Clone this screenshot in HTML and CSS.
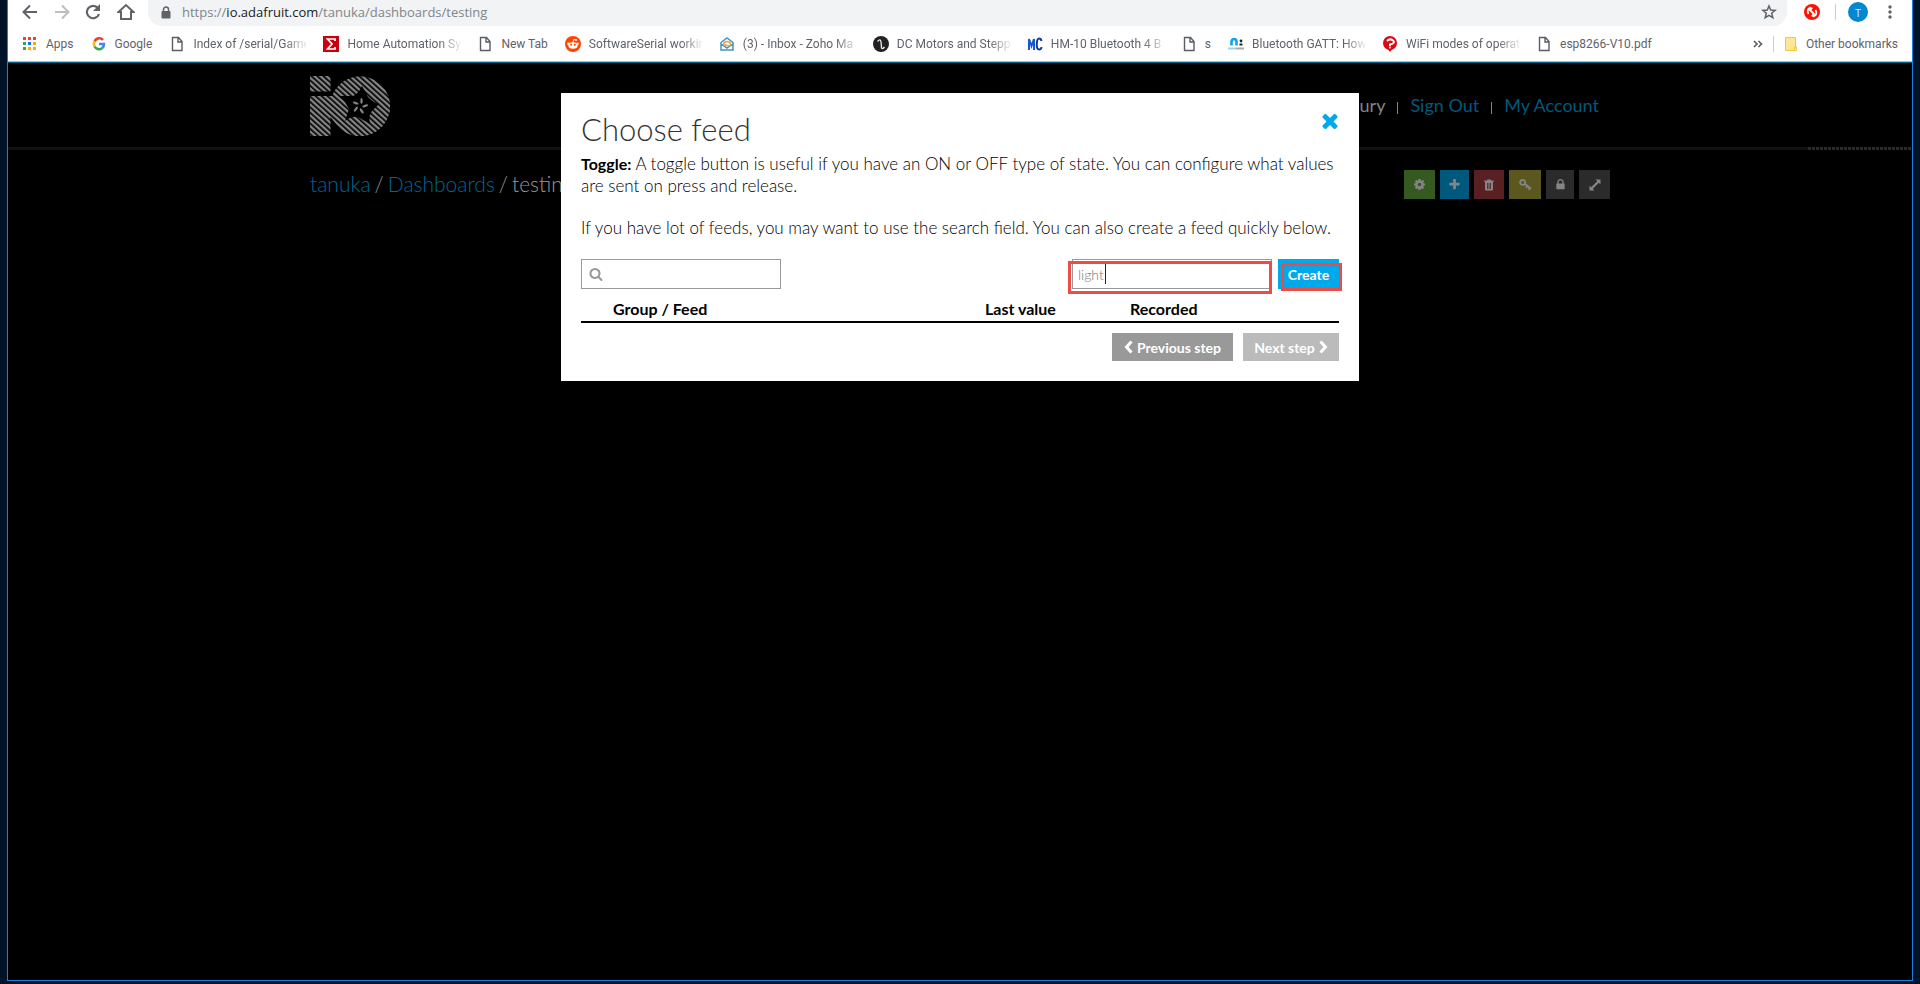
FILE: index.html
```
<!DOCTYPE html>
<html lang="en">
<head>
<meta charset="utf-8">
<title>Adafruit IO - testing</title>
<link rel="stylesheet" href="styles.css">
</head>
<body>
<div class="window">
  <header class="browser">
    <div class="toolbar">
      <div class="nav-buttons">
        <button class="icon-button" aria-label="Back"><svg width="16" height="16" viewBox="0 0 16 16" fill="none" stroke="#5f6368" stroke-width="2"><path d="M15 8H2M8 1.500L1.500 8L8 14.500"/></svg></button>
        <button class="icon-button" aria-label="Forward"><svg width="16" height="16" viewBox="0 0 16 16" fill="none" stroke="#bcbec0" stroke-width="2"><path d="M1 8h13M8 1.500L14.500 8L8 14.500"/></svg></button>
        <button class="icon-button" aria-label="Reload"><svg width="16" height="16" viewBox="0 0 16 16"><path d="M13 4.200A6.200 6.200 0 1 0 14 10" fill="none" stroke="#5f6368" stroke-width="2.200"/><path d="M15 0v7H8z" fill="#5f6368"/></svg></button>
        <button class="icon-button" aria-label="Home"><svg width="18" height="18" viewBox="0 0 18 18" fill="none" stroke="#5f6368" stroke-width="2"><path d="M4 9v7h10V9h2.500L9 2 1.500 9z"/></svg></button>
      </div>
      <div class="address">
        <svg width="10" height="13" viewBox="0 0 10 13"><path d="M2.500 6V3.500a2.500 2.500 0 0 1 5 0V6" fill="none" stroke="#5f6368" stroke-width="1.500"/><rect x="0.500" y="5" width="9" height="7.500" rx="1" fill="#5f6368"/></svg>
        <span class="url">https://<b>io.adafruit.com</b>/tanuka/dashboards/testing</span>
        <button class="icon-button star" aria-label="Bookmark this page"><svg width="16" height="16" viewBox="0 0 16 16"><path d="M8 2l1.700 4.100 4.400.3-3.400 2.900 1.100 4.300L8 11.300l-3.800 2.300 1.100-4.300L1.900 6.400l4.400-.3z" fill="none" stroke="#5f6368" stroke-width="1.500"/></svg></button>
      </div>
      <div class="toolbar-end">
        <button class="icon-button" aria-label="Extension"><svg width="16" height="16" viewBox="0 0 16 16"><circle cx="8" cy="8" r="8" fill="#fb1404"/><path d="M7 4C3.500 4 3 7.500 4.500 10M9 12c3.500 0 4-3.500 2.500-6M5.500 5.500l5 5" fill="none" stroke="#fff" stroke-width="1.800"/><path d="M5.500 2.500L9 4 6.500 7zM10.500 13.500L7 12l2.500-3z" fill="#fff"/></svg></button>
        <span class="divider"></span>
        <button class="avatar" aria-label="Profile">T</button>
        <button class="icon-button" aria-label="Menu"><svg width="4" height="14" viewBox="0 0 4 14" fill="#5f6368"><circle cx="2" cy="2" r="1.700"/><circle cx="2" cy="7" r="1.700"/><circle cx="2" cy="12" r="1.700"/></svg></button>
      </div>
    </div>
    <nav class="bookmarks" aria-label="Bookmarks">
      <a href="#"><svg width="16" height="16" viewBox="0 0 16 16"><g fill="#ea4335"><path d="M1 1h3v3H1zM6 1h3v3H6zM11 1h3v3h-3z"/></g><path d="M1 6h3v3H1zM1 11h3v3H1z" fill="#34a853"/><path d="M6 6h3v3H6z" fill="#1a73e8"/><path d="M11 6h3v3h-3zM6 11h3v3H6zM11 11h3v3h-3z" fill="#fbab05"/></svg><span>Apps</span></a>
      <a href="#"><svg width="16" height="16" viewBox="0 0 16 16" fill="none" stroke-width="2.600"><path d="M12 4A5 5 0 0 0 3.600 5.500" stroke="#ea4335"/><path d="M3.600 5.500A5 5 0 0 0 3.600 10.500" stroke="#fbbc05"/><path d="M3.600 10.500A5 5 0 0 0 11.300 12" stroke="#34a853"/><path d="M11.300 12Q13 10.500 12.900 8H8" stroke="#4285f4"/></svg><span>Google</span></a>
      <a href="#"><svg width="16" height="16" viewBox="0 0 16 16" fill="none" stroke="#5a5d61" stroke-width="1.400"><path d="M3.500 1.500h6l3.500 4v9H3.500zM9 1.500V6h4"/></svg><span class="faded">Index of /serial/Game</span></a>
      <a href="#"><svg width="16" height="16" viewBox="0 0 16 16"><path d="M0 0h16v16H0z" fill="#c9000f"/><path d="M12 5V3H4.500L9 8l-4.500 5H12v-2" fill="none" stroke="#fff" stroke-width="1.700"/></svg><span class="faded">Home Automation Sy</span></a>
      <a href="#"><svg width="16" height="16" viewBox="0 0 16 16" fill="none" stroke="#5a5d61" stroke-width="1.400"><path d="M3.500 1.500h6l3.500 4v9H3.500zM9 1.500V6h4"/></svg><span>New Tab</span></a>
      <a href="#"><svg width="16" height="16" viewBox="0 0 16 16"><circle cx="8" cy="8" r="8" fill="#ff4500"/><ellipse cx="8" cy="9.500" rx="4.600" ry="3.300" fill="#fff"/><circle cx="3.500" cy="7.700" r="1.300" fill="#fff"/><circle cx="12.500" cy="7.700" r="1.300" fill="#fff"/><circle cx="11" cy="4" r="1.100" fill="#fff"/><path d="M8 6.500l.7-3 2.300.5M6 11q2 1.200 4 0" fill="none" stroke="#fff"/><circle cx="6.200" cy="8.800" r="1" fill="#ff4500"/><circle cx="9.800" cy="8.800" r="1" fill="#ff4500"/></svg><span class="faded">SoftwareSerial workin</span></a>
      <a href="#"><svg width="16" height="16" viewBox="0 0 16 16" fill="none" stroke-width="1.500"><path d="M2 6.500L8 2l6 4.500V14H2zM2 8l6 4 6-4" stroke="#4392c8"/><path d="M4.500 8Q5 5.500 8 5.500T11.500 8 8 9.500 5 8" stroke="#e9a13b"/></svg><span class="faded">(3) - Inbox - Zoho Ma</span></a>
      <a href="#"><svg width="16" height="16" viewBox="0 0 16 16"><circle cx="8" cy="8" r="8" fill="#222"/><path d="M4.500 5.500Q7.500 2 8 6t.5 6q1 1.500 3-1" fill="none" stroke="#eee" stroke-width="1.300"/></svg><span class="faded">DC Motors and Stepp</span></a>
      <a href="#"><svg width="16" height="16" viewBox="0 0 16 16" fill="none" stroke="#1558d0" stroke-width="2"><path d="M2 14V3l2.500 7L7 3v11"/><path d="M14.500 5Q14 2.500 12 2.500T9.800 8t2.200 5.500T14.500 11" stroke="#0b3d9c"/></svg><span class="faded">HM-10 Bluetooth 4 B</span></a>
      <a href="#"><svg width="16" height="16" viewBox="0 0 16 16" fill="none" stroke="#5a5d61" stroke-width="1.400"><path d="M3.500 1.500h6l3.500 4v9H3.500zM9 1.500V6h4"/></svg><span>s</span></a>
      <a href="#"><svg width="16" height="16" viewBox="0 0 16 16" fill="none"><path d="M3.500 9.500V6Q3.500 3 6 3t2.500 3v3.500" stroke="#12a5e8" stroke-width="2.600"/><circle cx="13" cy="5" r="1.400" fill="#222"/><path d="M11.500 8.500h3" stroke="#222" stroke-width="2"/><path d="M0 12.500h8" stroke="#9ad4ef" stroke-width="2"/><path d="M8 12.500h8" stroke="#aaa" stroke-width="2"/></svg><span class="faded">Bluetooth GATT: How</span></a>
      <a href="#"><svg width="16" height="16" viewBox="0 0 16 16"><circle cx="8" cy="7" r="7" fill="#d90a14"/><path d="M5 12h6l-3 4z" fill="#d90a14"/><path d="M5 5q3-3 6-.5T8 8.500v1.500" fill="none" stroke="#fff" stroke-width="2"/><circle cx="8" cy="11.500" r="1" fill="#fff"/></svg><span class="faded">WiFi modes of operat</span></a>
      <a href="#"><svg width="16" height="16" viewBox="0 0 16 16" fill="none" stroke="#5a5d61" stroke-width="1.400"><path d="M3.500 1.500h6l3.500 4v9H3.500zM9 1.500V6h4"/></svg><span>esp8266-V10.pdf</span></a>
      <div class="bookmarks-end">
        <button class="icon-button" aria-label="More bookmarks"><svg width="10" height="8" viewBox="0 0 10 8" fill="none" stroke="#5f6368" stroke-width="1.700"><path d="M1 1l3 3-3 3M5.500 1l3 3-3 3"/></svg></button>
        <span class="divider"></span>
        <a href="#"><svg width="14" height="16" viewBox="0 0 14 16"><path d="M1.500 1.500h10v9.500h1v3.500h-11z" fill="#ffe694" stroke="#efc944"/><path d="M10.500 14v-3h2" fill="none" stroke="#efc944"/></svg><span>Other bookmarks</span></a>
      </div>
    </nav>
  </header>

  <div class="page">
    <header class="site-header">
      <div class="container header-row">
        <a href="#" class="logo" aria-label="Adafruit IO">
          <svg width="80" height="60" viewBox="0 0 80 60">
            <defs>
              <pattern id="stripes" width="4" height="4" patternUnits="userSpaceOnUse" patternTransform="rotate(42)"><rect width="4" height="2.300" fill="#858585"/></pattern>
            </defs>
            <path fill="url(#stripes)" d="M0 0h20.500v15.500H0zM0 20h22A30 30 0 1 1 26 48L20.500 41V60H0z"/>
            <path d="M52 10L58 21Q64 27 69 28L62 35Q58 40 60 48L48 41Q42 40 35 45L39 33Q35 25 30 20L43 20Q48 18 52 10z"/>
            <g fill="#858585"><ellipse cx="51.500" cy="25" rx="1.200" ry="3"/><ellipse cx="51.500" cy="25" rx="1.200" ry="3" transform="rotate(72 50 30)"/><ellipse cx="51.500" cy="25" rx="1.200" ry="3" transform="rotate(144 50 30)"/><ellipse cx="51.500" cy="25" rx="1.200" ry="3" transform="rotate(216 50 30)"/><ellipse cx="51.500" cy="25" rx="1.200" ry="3" transform="rotate(288 50 30)"/></g>
          </svg>
        </a>
        <nav class="account" aria-label="Account"><span>ury</span><i></i><a href="#">Sign Out</a><i></i><a href="#">My Account</a></nav>
      </div>
      <div class="rule"></div>
    </header>
    <div class="container dashboard-row">
      <nav class="breadcrumb" aria-label="Breadcrumb"><a href="#">tanuka</a><span>/</span><a href="#">Dashboards</a><span>/</span><span>testing</span></nav>
      <div class="actions">
        <button class="green" aria-label="Settings"><svg width="13" height="13" viewBox="0 0 1792 1792"><path d="M1152 896q0-106-75-181t-181-75-181 75-75 181 75 181 181 75 181-75 75-181zm512-109v222q0 12-8 23t-20 13l-185 28q-19 54-39 91 35 50 107 138 10 12 10 25t-9 23q-27 37-99 108t-94 71q-12 0-26-9l-138-108q-44 23-91 38-16 136-29 186-7 28-36 28h-222q-14 0-24.500-8.500t-11.500-21.500l-28-184q-49-16-90-37l-141 107q-10 9-25 9-14 0-25-11-126-114-165-168-7-10-7-23 0-12 8-23 15-21 51-66.500t54-70.500q-27-50-41-99l-183-27q-13-2-21-12.500t-8-23.500v-222q0-12 8-23t19-13l186-28q14-46 39-92-40-57-107-138-10-12-10-24 0-10 9-23 26-36 98.500-107.500t94.500-71.500q13 0 26 10l138 107q44-23 91-38 16-136 29-186 7-28 36-28h222q14 0 24.500 8.500t11.500 21.500l28 184q49 16 90 37l142-107q9-9 24-9 13 0 25 10 129 119 165 170 7 8 7 22 0 12-8 23-15 21-51 66.500t-54 70.500q26 50 41 98l183 28q13 2 21 12.500t8 23.500z"/></svg></button>
        <button class="blue" aria-label="Add block"><svg width="13" height="13" viewBox="0 0 1792 1792"><path d="M1600 736v192q0 40-28 68t-68 28h-416v416q0 40-28 68t-68 28h-192q-40 0-68-28t-28-68v-416h-416q-40 0-68-28t-28-68v-192q0-40 28-68t68-28h416v-416q0-40 28-68t68-28h192q40 0 68 28t28 68v416h416q40 0 68 28t28 68z"/></svg></button>
        <button class="red" aria-label="Delete"><svg width="12" height="12" viewBox="0 0 12 12"><path fill-rule="evenodd" d="M4 1.500L4.500.5h3l.5 1h3v1h-1V10.500q0 1-1 1H3q-1 0-1-1V2.500H1v-1zM4 4v6h.8V4zM5.600 4v6h.8V4zM7.200 4v6H8V4z"/></svg></button>
        <button class="olive" aria-label="Key"><svg width="13" height="13" viewBox="0 0 13 13"><path fill="none" stroke="#858585" stroke-width="1.800" d="M5 6.500A2.500 2.500 0 1 1 6 3.500 2.500 2.500 0 0 1 5 6.500zM5.700 5.700l6.300 5M8.500 8L7 9.800M11 10L9.700 11.700"/></svg></button>
        <button class="gray narrow" aria-label="Privacy"><svg width="13" height="13" viewBox="0 0 1792 1792"><path d="M640 768h512v-192q0-106-75-181t-181-75-181 75-75 181v192zm832 96v576q0 40-28 68t-68 28h-960q-40 0-68-28t-28-68v-576q0-40 28-68t68-28h32v-192q0-184 132-316t316-132 316 132 132 316v192h32q40 0 68 28t28 68z"/></svg></button>
        <button class="gray" aria-label="Full screen"><svg width="12" height="12" viewBox="0 0 12 12"><path d="M6.500 .5h5v5L9.800 3.800 3.800 9.800 5.500 11.500h-5v-5L2.200 8.200 8.200 2.200z"/></svg></button>
      </div>
    </div>
  </div>
</div>

<div class="overlay">
  <section class="modal" role="dialog" aria-labelledby="modal-title">
    <div class="modal-head">
      <h1 id="modal-title">Choose feed</h1>
      <button class="icon-button" aria-label="Close"><svg width="16" height="16" viewBox="302 302 1188 1252"><path fill="#00a9eb" d="M1490 1322q0 40-28 68l-136 136q-28 28-68 28t-68-28l-294-294-294 294q-28 28-68 28t-68-28l-136-136q-28-28-28-68t28-68l294-294-294-294q-28-28-28-68t28-68l136-136q28-28 68-28t68 28l294 294 294-294q28-28 68-28t68 28l136 136q28 28 28 68t-28 68l-294 294 294 294q28 28 28 68z"/></svg></button>
    </div>
    <p><b>Toggle:</b> A toggle button is useful if you have an ON or OFF type of state. You can configure what values are sent on press and release.</p>
    <p>If you have lot of feeds, you may want to use the search field. You can also create a feed quickly below.</p>
    <form class="feed-tools">
      <label class="field search"><svg width="14" height="14" viewBox="0 0 1792 1792" fill="#999"><path d="M1216 832q0-185-131.500-316.500t-316.500-131.500-316.500 131.500-131.500 316.500 131.500 316.500 316.500 131.500 316.500-131.500 131.500-316.500zm512 832q0 52-38 90t-90 38q-54 0-90-38l-343-342q-179 124-399 124-143 0-273.500-55.500t-225-150-150-225-55.500-273.500 55.500-273.500 150-225 225-150 273.500-55.500 273.500 55.500 225 150 150 225 55.500 273.500q0 220-124 399l343 343q37 37 37 90z"/></svg><input type="text" aria-label="Search feeds"></label>
      <div class="create-group">
        <div class="marked marked-field"><label class="field"><input type="text" aria-label="New feed name" value="light"></label><span class="caret"></span></div>
        <div class="marked marked-button"><button type="button" class="button create">Create</button></div>
      </div>
    </form>
    <table>
      <colgroup><col class="col-feed"><col class="col-value"><col></colgroup>
      <thead><tr><th>Group / Feed</th><th>Last value</th><th>Recorded</th></tr></thead>
    </table>
    <div class="steps">
      <button class="button previous"><svg width="9" height="14" viewBox="0 0 9 14"><path d="M7.500 1.500L2.500 7l5 5.500" fill="none" stroke="#fff" stroke-width="3"/></svg>Previous step</button>
      <button class="button next">Next step<svg width="9" height="14" viewBox="0 0 9 14"><path d="M1.500 1.500L6.500 7l-5 5.500" fill="none" stroke="#fff" stroke-width="3"/></svg></button>
    </div>
  </section>
</div>
</body>
</html>
```
FILE: styles.css
```
* { box-sizing: border-box; }
body {
  margin: 0;
  min-height: 100vh;
  padding: 0 7px 3px;
  display: flex;
  background: #001329;
  font-family: "Lato", sans-serif;
}
button { border: 0; padding: 0; font: inherit; cursor: pointer; }
svg { display: block; flex: none; }
a { text-decoration: none; }

.window {
  flex: 1;
  min-width: 0;
  display: flex;
  flex-direction: column;
  border: 1px solid #1a80d9;
  border-top: 0;
  background: #000;
}

/* Browser toolbar */
.browser {
  background: #fff;
  border-bottom: 1px solid #00618a;
  box-shadow: inset 0 -1px #b6b4b6;
  color: #5f6368;
  font-family: "Open Sans", sans-serif;
}
.toolbar { display: flex; height: 26px; }
.icon-button { background: none; display: grid; place-items: center; }
.nav-buttons {
  display: flex;
  align-items: center;
  justify-content: space-between;
  width: 140px;
  padding: 0 13px 2px 14px;
}
.address {
  flex: 1;
  display: flex;
  align-items: center;
  padding: 0 10px 2px 13px;
  background: #f1f3f4;
  border-radius: 0 0 14px 14px;
}
.url { margin-left: 11px; font-size: 13px; line-height: 18px; color: #80868b; }
.url b { font-weight: 400; color: #202124; }
.star { margin-left: auto; }
.toolbar-end { display: flex; align-items: center; gap: 15px; padding: 0 20px 2px 17px; }
.divider { width: 1px; height: 16px; background: #ccc; }
.avatar {
  width: 20px;
  height: 20px;
  margin: 0 5px 0 -3px;
  border-radius: 50%;
  background: #0288d1;
  color: #cfe8f5;
  font-size: 11px;
}

.bookmarks { display: flex; align-items: center; gap: 17px; height: 36px; padding: 0 14px 1px; }
.bookmarks a {
  display: flex;
  align-items: center;
  gap: 8px;
  color: #5f6368;
  font: 12px "Roboto", sans-serif;
}
.bookmarks span { white-space: nowrap; }
.bookmarks .faded {
  width: 113px;
  mask-image: linear-gradient(90deg, #000 92px, transparent 116px);
}
.bookmarks-end { margin-left: auto; display: flex; align-items: center; gap: 10px; }

/* Site */
.container { width: 100%; max-width: 1300px; margin: 0 auto; }
.header-row { display: flex; justify-content: space-between; align-items: flex-start; padding: 13px 0 11px; }
.account {
  display: flex;
  align-items: center;
  padding: 18px 11px 0 0;
  font-size: 18px;
  line-height: 22px;
  color: #858585;
}
.account i { width: 1px; height: 12px; margin: 6px 12px 0; background: #858585; }
.page a { color: #00587c; }
.rule {
  height: 3px;
  background: repeating-linear-gradient(90deg, #2a2a2a 0 3px, #000 3px 4px) right / 104px 3px no-repeat, #111;
}
.dashboard-row { display: flex; justify-content: space-between; align-items: flex-start; padding-top: 20px; }
.breadcrumb { display: flex; gap: 4px; margin-top: 2px; font-size: 21px; line-height: 24px; font-weight: 300; color: #999; }
.breadcrumb a { color: #006590; }
.actions { display: flex; gap: 5px; }
.actions button { width: 31px; height: 29px; display: grid; place-items: center; }
.actions svg { fill: #858585; }
.actions .green { background: #35591f; }
.actions .blue { width: 29px; background: #00587c; }
.actions .red { width: 30px; background: #582022; }
.actions .olive { width: 32px; background: #5a581f; }
.actions .gray { background: #2b2b2b; }
.actions .narrow { width: 28px; }

/* Dialog */
.overlay { position: fixed; inset: 93px 16px auto; }
.modal {
  max-width: 798px;
  margin: 0 auto;
  padding: 20px;
  background: #fff;
  color: #000;
}
.modal-head { display: flex; justify-content: space-between; align-items: flex-start; padding-right: 1px; }
h1 { margin: 0 0 7px; font-size: 31px; line-height: 33px; font-weight: 300; color: #333; }
.modal p { margin: 0 0 20px; font-size: 17px; line-height: 22px; font-weight: 300; }
.modal p b { font-size: 16px; font-weight: 700; }
.feed-tools { display: flex; justify-content: space-between; }
.field {
  display: flex;
  align-items: center;
  width: 200px;
  height: 30px;
  padding: 0 5px;
  border: 1px solid #999;
}
.search { gap: 6px; padding-left: 7px; }
.field input {
  width: 100%;
  min-width: 0;
  padding: 0;
  border: 0;
  outline: 0;
  background: none;
  color: #777;
  font: 300 14px "Lato", sans-serif;
}
.create-group { display: flex; gap: 6px; }
.marked { position: relative; }
.marked::after { content: ""; position: absolute; border: 3px solid #eb4c46; pointer-events: none; }
.marked-field::after { inset: 2px 0 -5px -4px; }
.marked-button::after { inset: 4px -3px -2px 3px; }
.caret { position: absolute; left: 33px; top: 5px; width: 1px; height: 20px; background: #222; }
.button {
  display: flex;
  align-items: center;
  justify-content: center;
  gap: 4px;
  height: 28px;
  color: #fff;
  font-size: 14px;
  font-weight: 700;
}
.create { width: 61px; height: 30px; background: #00a9eb; }
table {
  width: 100%;
  margin-top: 8px;
  border-collapse: collapse;
  table-layout: fixed;
  border-bottom: 2px solid #000;
}
.col-feed { width: 404px; }
.col-value { width: 145px; }
th { padding: 1px 0; font-size: 16px; line-height: 22px; text-align: left; }
th:first-child { padding-left: 32px; }
.steps { display: flex; justify-content: flex-end; gap: 10px; margin-top: 10px; }
.previous { width: 121px; background: #999; }
.next { width: 96px; background: #bbb; }
```
